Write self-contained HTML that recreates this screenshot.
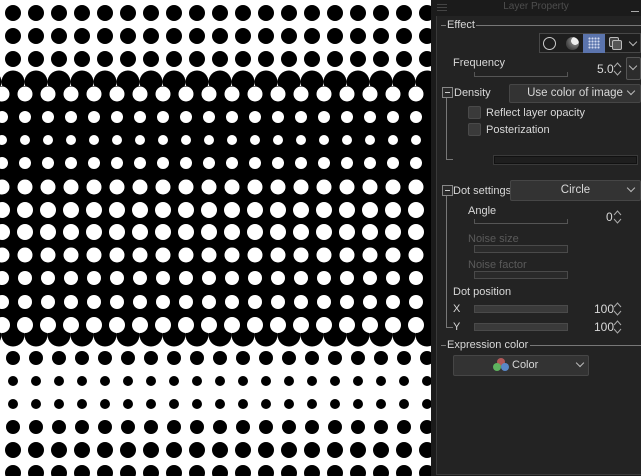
<!DOCTYPE html>
<html><head><meta charset="utf-8"><style>
*{margin:0;padding:0;box-sizing:border-box}
body{width:641px;height:476px;overflow:hidden;background:#fff;position:relative;font-family:"Liberation Sans",sans-serif;font-size:11px;color:#d8d8d8}
#dots{position:absolute;left:0;top:0}
#panel{position:absolute;left:431px;top:0;width:210px;height:476px;background:#1b1b1b}
#inner{position:absolute;left:5px;top:16px;width:205px;height:459px;background:#232323;border-left:1px solid #3a3a3a;border-bottom:1px solid #3a3a3a}
.a{position:absolute;white-space:nowrap}
.t{position:absolute;white-space:nowrap;line-height:14px}
.dim{color:#5a5a5a}
.bar{position:absolute;height:8px;border:1px solid #4a4a4a;background:#2a2a2a}
.brk{position:absolute;height:5px;border:1px solid #555;border-top:none}
.dd{position:absolute;background:#333;border:1px solid #464646;border-radius:2px;text-align:center;line-height:17px;color:#d8d8d8;font-size:11.5px}
.chev{position:absolute;width:6px;height:6px;border-right:1px solid #bbb;border-bottom:1px solid #bbb;transform:rotate(45deg)}
.cb{position:absolute;width:13px;height:13px;background:#3a3a3a;border:1px solid #4a4a4a;border-radius:2px}
.mn{position:absolute;width:11px;height:11px;border:1px solid #888;background:#2a2a2a}
.mn:after{content:"";position:absolute;left:2px;top:4px;width:5px;height:1px;background:#ccc}
.ln{position:absolute;background:#777}
.sp{position:absolute;width:9px;height:16px}
</style></head><body>
<svg id="dots" width="431" height="476" xmlns="http://www.w3.org/2000/svg"></svg>
<script>
var s=document.getElementById('dots'),h='<rect x="0" y="86" width="431" height="245" fill="#000"/>';
var B=[[13,8],[36,8],[59,8],[82,11.5],[335,11.5],[358,7],[381,5],[404,5],[427,7],[450,8],[473,8]];
var W=[[94,7.5],[117,6],[140,5],[163,6],[187,7.5],[210,8],[232,8],[255,7.5],[278,7],[302,7],[325,8]];
B.forEach(function(r){for(var i=-1;i<20;i++)h+='<circle cx="'+(13+23*i)+'" cy="'+r[0]+'" r="'+r[1]+'" fill="#000"/>';});
W.forEach(function(r){for(var i=0;i<20;i++)h+='<circle cx="'+(2+23*i)+'" cy="'+r[0]+'" r="'+r[1]+'" fill="#fff"/>';});
s.innerHTML=h;
var sv='<svg width="9" height="16" viewBox="0 0 9 16"><path d="M1 6 L4.5 2 L8 6 M1 10 L4.5 14 L8 10" fill="none" stroke="#aaa" stroke-width="1"/></svg>';
window.addEventListener('DOMContentLoaded',function(){document.querySelectorAll('.sp').forEach(function(e){e.innerHTML=sv;});});
</script>
<div id="panel">
 <div class="a" style="left:6px;top:4px;width:10px;height:7px;border-top:1px solid #444;border-bottom:1px solid #444"></div>
 <div class="a" style="left:6px;top:7px;width:10px;height:1px;background:#444"></div>
 <div class="a" style="left:0;width:210px;top:1px;text-align:center;font-size:10px;color:#4e4e4e">Layer Property</div>
 <div class="a" style="left:200px;top:11px;width:8px;height:1px;background:#aaa"></div>
 <div id="inner"></div>
</div>
<div style="position:absolute;left:0;top:0">
 <div class="ln" style="left:441px;top:25px;width:5px;height:1px"></div>
 <div class="t" style="left:447px;top:18px">Effect</div>
 <div class="ln" style="left:476px;top:25px;width:165px;height:1px"></div>
 <div class="a" style="left:539px;top:33px;width:102px;height:20px;background:#1e1e1e;border:1px solid #474747"></div>
 <div class="a" style="left:543px;top:37px;width:13px;height:13px;border:1px solid #ccc;border-radius:50%"></div>
 <div class="a" style="left:566px;top:37px;width:13px;height:13px;border-radius:50%;background:radial-gradient(circle at 70% 30%,#eee 30%,#777 32%,#444 70%)"></div>
 <div class="a" style="left:583px;top:34px;width:22px;height:19px;background:#5b74ad"></div>
 <div class="a" style="left:588px;top:37px;width:12px;height:12px;background-image:radial-gradient(circle,#d0d8ee 0.9px,transparent 1.2px);background-size:3px 3px"></div>
 <div class="a" style="left:609px;top:37px;width:10px;height:10px;border:1px solid #bbb;background:#444;border-radius:2px"></div>
 <div class="a" style="left:612px;top:40px;width:10px;height:10px;border:1px solid #bbb;background:#555;border-radius:2px"></div>
 <div class="chev" style="left:630px;top:39px"></div>
 <div class="t" style="left:453px;top:56px">Frequency</div>
 <div class="brk" style="left:474px;top:72px;width:94px"></div>
 <div class="t" style="left:597px;top:62px;font-size:12px">5.0</div>
 <div class="sp" style="left:613px;top:61px"></div>
 <div class="a" style="left:626px;top:57px;width:15px;height:23px;background:#2c2c2c;border:1px solid #555;border-radius:2px"></div>
 <div class="chev" style="left:630px;top:63px"></div>
 <div class="mn" style="left:442px;top:87px"></div>
 <div class="t" style="left:454px;top:86px">Density</div>
 <div class="dd" style="left:509px;top:84px;width:132px;height:19px">Use color of image</div>
 <div class="chev" style="left:628px;top:88px"></div>
 <div class="ln" style="left:446px;top:98px;width:1px;height:61px"></div>
 <div class="ln" style="left:446px;top:159px;width:7px;height:1px"></div>
 <div class="cb" style="left:468px;top:106px"></div>
 <div class="t" style="left:486px;top:106px">Reflect layer opacity</div>
 <div class="cb" style="left:468px;top:123px"></div>
 <div class="t" style="left:486px;top:123px">Posterization</div>
 <div class="bar" style="left:494px;top:156px;width:143px;height:8px;background:#1e1e1e;border-color:#111;box-shadow:0 0 0 1px #3a3a3a"></div>
 <div class="mn" style="left:442px;top:185px"></div>
 <div class="t" style="left:453px;top:184px">Dot settings</div>
 <div class="dd" style="left:510px;top:180px;width:131px;height:21px;line-height:19px">Circle</div>
 <div class="chev" style="left:628px;top:185px"></div>
 <div class="ln" style="left:446px;top:196px;width:1px;height:131px"></div>
 <div class="ln" style="left:446px;top:327px;width:7px;height:1px"></div>
 <div class="t" style="left:468px;top:204px">Angle</div>
 <div class="brk" style="left:474px;top:219px;width:94px"></div>
 <div class="t" style="left:606px;top:210px;font-size:12px">0</div>
 <div class="sp" style="left:613px;top:209px"></div>
 <div class="t dim" style="left:468px;top:232px">Noise size</div>
 <div class="bar" style="left:474px;top:245px;width:94px"></div>
 <div class="t dim" style="left:468px;top:258px">Noise factor</div>
 <div class="bar" style="left:474px;top:271px;width:94px"></div>
 <div class="t" style="left:453px;top:285px">Dot position</div>
 <div class="t" style="left:453px;top:302px">X</div>
 <div class="bar" style="left:474px;top:305px;width:94px;background:#3a3a3a"></div>
 <div class="t" style="left:594px;top:302px;font-size:12px">100</div>
 <div class="sp" style="left:613px;top:301px"></div>
 <div class="t" style="left:453px;top:320px">Y</div>
 <div class="bar" style="left:474px;top:323px;width:94px;background:#3a3a3a"></div>
 <div class="t" style="left:594px;top:320px;font-size:12px">100</div>
 <div class="sp" style="left:613px;top:319px"></div>
 <div class="ln" style="left:441px;top:345px;width:5px;height:1px"></div>
 <div class="t" style="left:447px;top:338px">Expression color</div>
 <div class="ln" style="left:530px;top:345px;width:111px;height:1px"></div>
 <div class="dd" style="left:453px;top:355px;width:136px;height:21px"></div>
 <div class="a" style="left:497px;top:358px;width:8px;height:8px;border-radius:50%;background:#b05858"></div>
 <div class="a" style="left:493px;top:363px;width:8px;height:8px;border-radius:50%;background:#5fb35f"></div>
 <div class="a" style="left:501px;top:363px;width:8px;height:8px;border-radius:50%;background:#5a88c8"></div>
 <div class="t" style="left:512px;top:358px">Color</div>
 <div class="chev" style="left:577px;top:360px"></div>
</div>
</body></html>
